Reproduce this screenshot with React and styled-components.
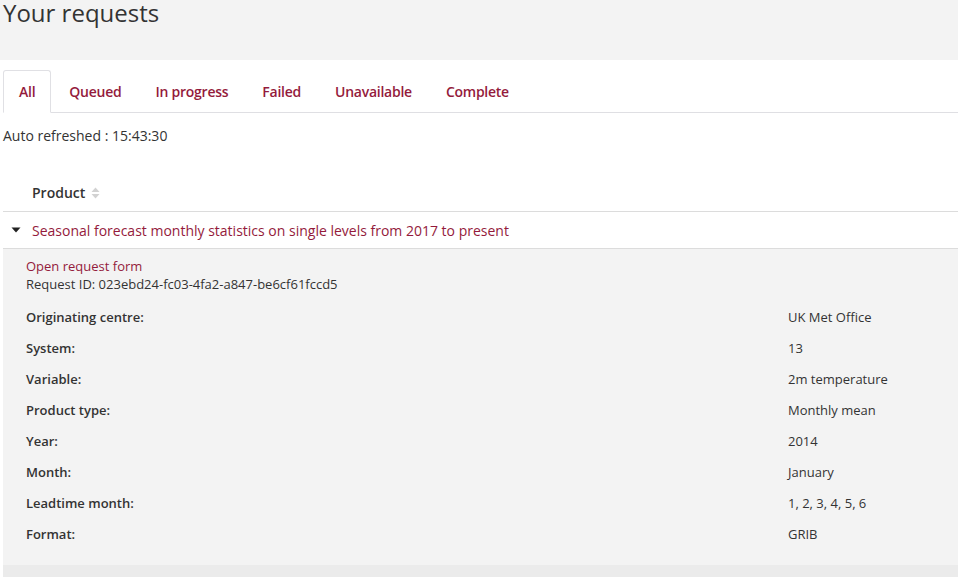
import React from 'react';
import styled, { createGlobalStyle } from 'styled-components';

const GlobalStyle = createGlobalStyle`
  html, body { margin: 0; padding: 0; background: #fff; }
  body {
    font-family: "Open Sans", "Liberation Sans", sans-serif;
    color: #333;
    overflow: hidden;
  }
`;

const maroon = '#941b3c';

const Header = styled.header`
  background: #f3f3f3;
  height: 60px;
  padding: 0 3px;
  overflow: hidden;
`;

const Title = styled.h1`
  margin: 0;
  font-size: 24px;
  font-weight: 400;
  line-height: 25px;
  color: #333;
`;

const Page = styled.main`
  padding: 10px 0 0 3px;
`;

const Tabs = styled.ul`
  display: flex;
  list-style: none;
  margin: 0;
  padding: 0;
  height: 42px;
  border-bottom: 1px solid #dfdfe3;
`;

const Tab = styled.li`
  display: flex;
  align-items: center;
  padding: 0 15px;
  margin-right: 2px;
  margin-bottom: -1px;
  font-size: 14px;
  font-weight: 600;
  letter-spacing: -0.25px;
  color: ${maroon};
  border: 1px solid ${p => (p.$active ? '#e0e0e4' : 'transparent')};
  border-bottom-color: ${p => (p.$active ? '#fff' : 'transparent')};
  border-radius: 3px 3px 0 0;
  background: ${p => (p.$active ? '#fff' : 'transparent')};
`;

const Refreshed = styled.p`
  margin: 0;
  padding-top: 13px;
  font-size: 14px;
  line-height: 20px;
`;

const Table = styled.div`
  margin-top: 28px;
`;

const HeadRow = styled.div`
  display: flex;
  align-items: center;
  height: 37px;
  padding-left: 29px;
  border-bottom: 1px solid #dcdcdc;
  font-size: 14px;
  font-weight: 600;
  gap: 6px;
`;

const ProductRow = styled.div`
  display: flex;
  align-items: center;
  height: 36px;
  border-bottom: 1px solid #dcdcdc;
  font-size: 14px;
  color: ${maroon};
`;

const Caret = styled.span`
  width: 29px;
  display: flex;
  justify-content: center;
  padding-right: 4px;
  box-sizing: border-box;
`;

const Details = styled.section`
  background: #f3f3f3;
  padding: 8px 23px 16px;
  font-size: 13px;
  border-bottom: 12px solid #ebebeb;
`;

const FormLink = styled.a`
  display: block;
  color: ${maroon};
  line-height: 18px;
  text-decoration: none;
`;

const RequestId = styled.div`
  line-height: 18px;
`;

const Specs = styled.dl`
  display: grid;
  grid-template-columns: 762px 1fr;
  grid-auto-rows: 31px;
  align-items: center;
  margin: 8px 0 0;
`;

const Label = styled.dt`
  font-weight: 600;
`;

const Value = styled.dd`
  margin: 0;
`;

const SortIcon = () => (
  <svg width="9" height="12" viewBox="0 0 9 12">
    <path d="M4.5 0.5 L8.5 5 H0.5 Z" fill="#d2d2d2" />
    <path d="M4.5 11.5 L8.5 7 H0.5 Z" fill="#d2d2d2" />
  </svg>
);

const CaretDown = () => (
  <svg width="10" height="6" viewBox="0 0 10 6">
    <path d="M0.5 0.5 H9.5 L5 5.5 Z" fill="#222" />
  </svg>
);

const tabs = ['All', 'Queued', 'In progress', 'Failed', 'Unavailable', 'Complete'];

const specs = [
  ['Originating centre:', 'UK Met Office'],
  ['System:', '13'],
  ['Variable:', '2m temperature'],
  ['Product type:', 'Monthly mean'],
  ['Year:', '2014'],
  ['Month:', 'January'],
  ['Leadtime month:', '1, 2, 3, 4, 5, 6'],
  ['Format:', 'GRIB'],
];

export default function App() {
  return (
    <>
      <GlobalStyle />
      <Header>
        <Title>Your requests</Title>
      </Header>
      <Page>
        <Tabs>
          {tabs.map((t, i) => (
            <Tab key={t} $active={i === 0}>{t}</Tab>
          ))}
        </Tabs>
        <Refreshed>Auto refreshed : 15:43:30</Refreshed>
        <Table>
          <HeadRow>
            Product <SortIcon />
          </HeadRow>
          <ProductRow>
            <Caret><CaretDown /></Caret>
            Seasonal forecast monthly statistics on single levels from 2017 to present
          </ProductRow>
          <Details>
            <FormLink href="#">Open request form</FormLink>
            <RequestId>Request ID: 023ebd24-fc03-4fa2-a847-be6cf61fccd5</RequestId>
            <Specs>
              {specs.map(([k, v]) => (
                <React.Fragment key={k}>
                  <Label>{k}</Label>
                  <Value>{v}</Value>
                </React.Fragment>
              ))}
            </Specs>
          </Details>
        </Table>
      </Page>
    </>
  );
}
